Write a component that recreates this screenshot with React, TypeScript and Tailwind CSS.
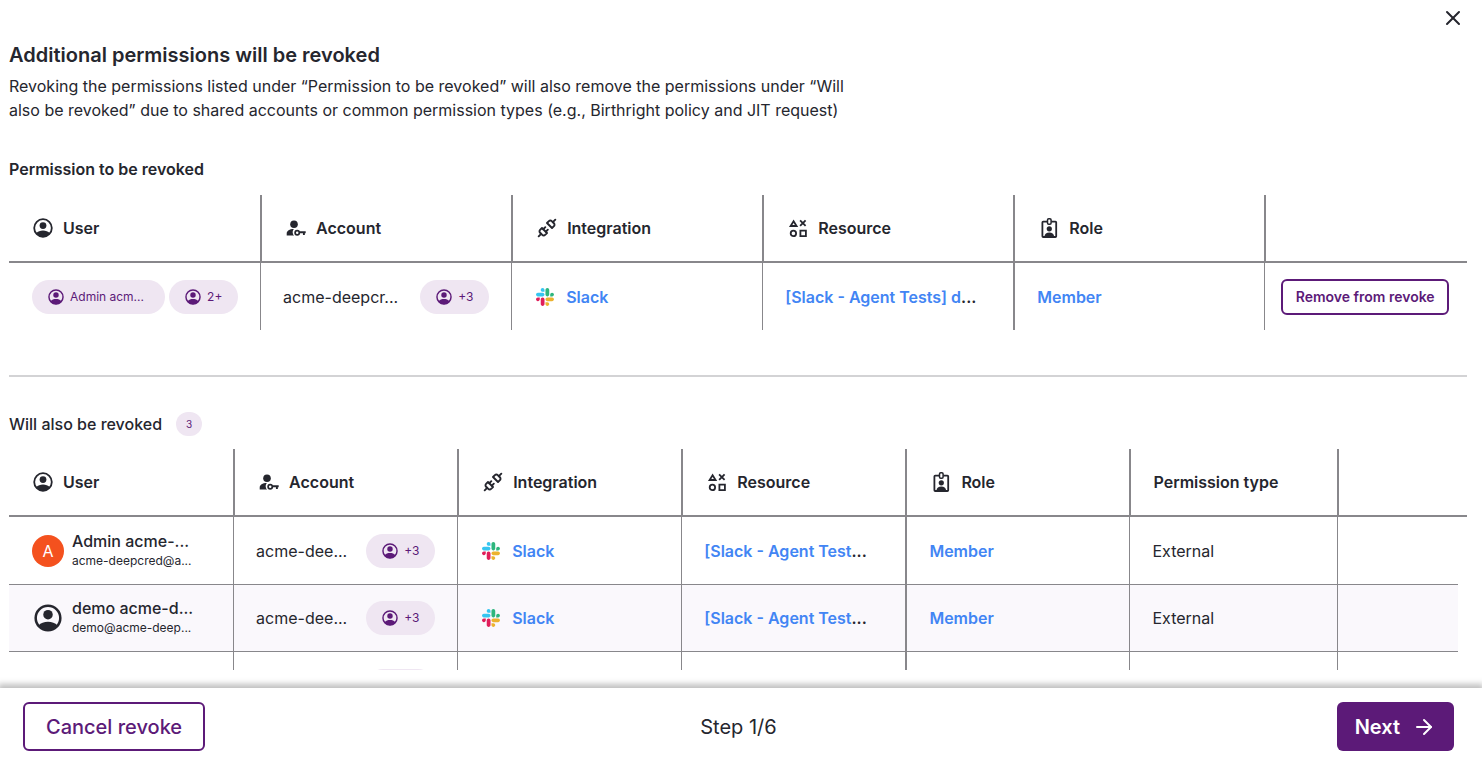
import type { ReactNode } from "react";
import { ArrowRight, Unplug, X } from "lucide-react";

type AlsoRevoked = {
  name: string;
  email: string;
  initial?: string;
  account: string;
};

const alsoRevoked: AlsoRevoked[] = [
  { name: "Admin acme-...", email: "acme-deepcred@a...", initial: "A", account: "acme-dee..." },
  { name: "demo acme-d...", email: "demo@acme-deep...", account: "acme-dee..." },
  { name: "demo acme-d...", email: "demo@acme-deep...", account: "acme-dee..." },
];

function UserIcon({ className }: { className: string }) {
  return (
    <svg viewBox="0 0 20 20" className={className} aria-hidden="true">
      <circle cx="10" cy="10" r="8.8" fill="none" stroke="currentColor" strokeWidth="1.8" />
      <circle cx="10" cy="7.6" r="3.4" fill="currentColor" />
      <path
        d="M3.2 15.3C4.8 13.4 7.3 12.6 10 12.6s5.2.8 6.8 2.7C15.4 17.6 12.9 19 10 19s-5.4-1.4-6.8-3.7Z"
        fill="currentColor"
      />
    </svg>
  );
}

function AccountIcon() {
  return (
    <svg viewBox="0 0 20 20" className="size-5" aria-hidden="true">
      <circle cx="8" cy="6.3" r="3.8" fill="currentColor" />
      <path d="M.7 17.6v-1.9c0-2.9 2.7-4.5 7.2-4.6-.9 1-1.3 2.3-1.2 3.6.1 1.2.6 2.2 1.4 2.9Z" fill="currentColor" />
      <circle cx="11.2" cy="14.7" r="2.1" fill="none" stroke="currentColor" strokeWidth="1.7" />
      <path d="M13.3 14.3h6.4M17.9 14.3v2.7" fill="none" stroke="currentColor" strokeWidth="1.9" />
    </svg>
  );
}

function ResourceIcon() {
  return (
    <svg
      viewBox="0 0 20 20"
      className="size-5"
      fill="none"
      stroke="currentColor"
      strokeWidth="1.8"
      aria-hidden="true"
    >
      <path d="M5.6 3.2 8.6 8H2.6Z" />
      <path d="m12.1 2.300 5.500 5.500M17.600 2.300l-5.500 5.500" />
      <circle cx="5.4" cy="15.4" r="2.700" />
      <path d="M12.400 12.700h5.500v5.400h-5.500Z" />
    </svg>
  );
}

function RoleIcon() {
  return (
    <svg viewBox="0 0 20 20" className="size-5" aria-hidden="true">
      <path
        d="M8.3 3.6H4.2c-.5 0-.8.3-.8.8v13.8c0 .5.3.8.8.8h12.2c.5 0 .8-.3.8-.8V4.4c0-.5-.3-.8-.8-.8h-4.1"
        fill="none"
        stroke="currentColor"
        strokeWidth="1.8"
      />
      <rect x="8.5" y=".8" width="3.6" height="5.4" rx="1.2" fill="none" stroke="currentColor" strokeWidth="1.5" />
      <circle cx="10.3" cy="10.8" r="2.6" fill="currentColor" />
      <path d="M5.4 18.4c.3-2.500 2.200-4 4.900-4s4.600 1.500 4.900 4Z" fill="currentColor" />
    </svg>
  );
}

function SlackLogo() {
  return (
    <svg viewBox="0 0 123 123" className="size-[18px] shrink-0" aria-hidden="true">
      <path
        fill="#e01e5a"
        d="M25.8 77.6c0 7.1-5.8 12.9-12.9 12.9S0 84.7 0 77.6s5.8-12.9 12.9-12.9h12.9v12.9zM32.3 77.6c0-7.1 5.8-12.9 12.9-12.9s12.9 5.8 12.9 12.9v32.3c0 7.1-5.8 12.9-12.9 12.9s-12.9-5.8-12.9-12.9V77.6z"
      />
      <path
        fill="#36c5f0"
        d="M45.2 25.8c-7.1 0-12.9-5.8-12.9-12.9S38.1 0 45.2 0s12.9 5.8 12.9 12.9v12.9H45.2zM45.2 32.3c7.1 0 12.9 5.8 12.9 12.9s-5.8 12.9-12.9 12.9H12.9C5.8 58.1 0 52.3 0 45.2s5.8-12.9 12.9-12.9h32.3z"
      />
      <path
        fill="#2eb67d"
        d="M97 45.2c0-7.1 5.8-12.9 12.9-12.9s12.9 5.8 12.9 12.9-5.8 12.9-12.9 12.9H97V45.2zM90.5 45.2c0 7.1-5.8 12.9-12.9 12.9s-12.9-5.8-12.9-12.9V12.9C64.7 5.8 70.5 0 77.6 0s12.9 5.8 12.9 12.9v32.3z"
      />
      <path
        fill="#ecb22e"
        d="M77.6 97c7.1 0 12.9 5.8 12.9 12.9s-5.8 12.9-12.9 12.9-12.9-5.8-12.9-12.9V97h12.9zM77.6 90.5c-7.1 0-12.9-5.8-12.9-12.9s5.8-12.9 12.9-12.9h32.3c7.1 0 12.9 5.8 12.9 12.9s-5.8 12.9-12.9 12.9H77.6z"
      />
    </svg>
  );
}

function HeadCell({ icon, label, width }: { icon: ReactNode; label: string; width: string }) {
  return (
    <th
      scope="col"
      className={`${width} h-[68px] border-b-2 border-l-2 border-[#88878b] pl-6 text-left font-semibold first:border-l-0`}
    >
      <div className="flex items-center gap-2.5">
        {icon}
        {label}
      </div>
    </th>
  );
}

function SharedHeads({ width }: { width: string }) {
  return (
    <>
      <HeadCell width={width} icon={<UserIcon className="size-5" />} label="User" />
      <HeadCell width={width} icon={<AccountIcon />} label="Account" />
      <HeadCell width={width} icon={<Unplug size={20} strokeWidth={2.3} />} label="Integration" />
      <HeadCell width={width} icon={<ResourceIcon />} label="Resource" />
      <HeadCell width={width} icon={<RoleIcon />} label="Role" />
    </>
  );
}

function Pill({ children, className = "w-[69px]" }: { children: ReactNode; className?: string }) {
  return (
    <span
      className={`${className} flex h-[34px] shrink-0 items-center gap-1.5 rounded-full bg-[#efe6f2] pl-4 text-xs text-[#5c1a78]`}
    >
      <UserIcon className="size-4 shrink-0" />
      {children}
    </span>
  );
}

function AccountCell({ account, className = "" }: { account: string; className?: string }) {
  return (
    <td className={`${className} border-l border-[#88878b] px-[22px]`}>
      <div className="flex items-center justify-between">
        <span className="whitespace-nowrap">{account}</span>
        <Pill>+3</Pill>
      </div>
    </td>
  );
}

function GrantCells({ resource, className = "" }: { resource: string; className?: string }) {
  return (
    <>
      <td className={`${className} border-l border-[#88878b] pl-6`}>
        <div className="flex items-center gap-3">
          <SlackLogo />
          <a href="#slack" className="font-semibold text-[#4285f4]">
            Slack
          </a>
        </div>
      </td>
      <td className={`${className} border-l border-[#88878b] pl-[22px] font-semibold whitespace-nowrap`}>
        <a href="#resource" className="text-[#4285f4]">
          {resource}
        </a>
        ...
      </td>
      <td className={`${className} border-l-2 border-[#88878b] pl-[22px]`}>
        <a href="#member" className="font-semibold text-[#4285f4]">
          Member
        </a>
      </td>
    </>
  );
}

export default function App() {
  return (
    <div className="flex h-screen flex-col overflow-hidden bg-white font-[Inter,sans-serif] text-base text-[#25262e]">
      <main className="flex min-h-0 flex-1 flex-col pr-[15px] pb-[18px] pl-[9px]">
        <div className="flex h-10 shrink-0 justify-end pt-1.5 pr-0.5">
          <button type="button" aria-label="Close" className="size-6 cursor-pointer">
            <X size={24} />
          </button>
        </div>

        <h1 className="text-xl leading-[30px] font-semibold">Additional permissions will be revoked</h1>
        <p className="mt-1 max-w-[868px] leading-6">
          Revoking the permissions listed under “Permission to be revoked” will also remove the permissions under “Will
          also be revoked” due to shared accounts or common permission types (e.g., Birthright policy and JIT request)
        </p>

        <h2 className="mt-[35px] leading-6 font-semibold">Permission to be revoked</h2>
        <table className="mt-3.5 w-full shrink-0 table-fixed border-separate border-spacing-0">
          <thead>
            <tr>
              <SharedHeads width="w-[17.22%]" />
              <th className="border-b-2 border-l-2 border-[#88878b]" aria-label="Actions" />
            </tr>
          </thead>
          <tbody>
            <tr className="h-[67px]">
              <td className="pr-[22px] pl-[23px]">
                <div className="flex gap-1">
                  <Pill className="flex-1">Admin acm...</Pill>
                  <Pill>2+</Pill>
                </div>
              </td>
              <AccountCell account="acme-deepcr..." />
              <GrantCells resource="[Slack - Agent Tests] d" />
              <td className="border-l border-[#88878b] pr-[18px] pl-4">
                <button
                  type="button"
                  className="h-9 w-full cursor-pointer rounded-md border-2 border-[#5c1a78] text-sm font-semibold whitespace-nowrap text-[#5c1a78]"
                >
                  Remove from revoke
                </button>
              </td>
            </tr>
          </tbody>
        </table>

        <hr className="mt-[45px] border-t-2 border-[#d3d3d5]" />

        <div className="mt-[35px] flex items-center gap-3.5">
          <h2 className="leading-6 font-medium">Will also be revoked</h2>
          <span className="flex h-6 w-[26px] items-center justify-center rounded-full bg-[#efe6f2] text-[10px] text-[#5c1a78]">
            3
          </span>
        </div>

        <div className="mt-[13px] min-h-0 flex-1 overflow-y-auto [scrollbar-width:none]">
          <table className="w-full table-fixed border-separate border-spacing-0">
            <thead>
              <tr>
                <SharedHeads width="w-[15.37%]" />
                <th
                  scope="col"
                  className="w-[14.25%] border-b-2 border-l-2 border-[#88878b] pl-[22px] text-left font-semibold"
                >
                  Permission type
                </th>
                <th className="border-b-2 border-l-2 border-[#88878b]" aria-label="Actions" />
                <th className="w-[9px] border-b-2 border-[#88878b]" aria-hidden="true" />
              </tr>
            </thead>
            <tbody>
              {alsoRevoked.map((row, index) => {
                const cell = index % 2 ? "h-[67px] border-b bg-[#faf8fc]" : "h-[68px] border-b";
                return (
                  <tr key={index}>
                    <td className={`${cell} border-[#88878b] pl-[23px]`}>
                      <div className="flex items-center gap-2">
                        {row.initial ? (
                          <span className="flex size-8 shrink-0 items-center justify-center rounded-full bg-[#f4511e] text-white">
                            {row.initial}
                          </span>
                        ) : (
                          <span className="flex size-8 shrink-0 items-center justify-center">
                            <UserIcon className="size-7" />
                          </span>
                        )}
                        <div className="whitespace-nowrap">
                          <div className="leading-5 font-medium">{row.name}</div>
                          <div className="text-xs leading-5">{row.email}</div>
                        </div>
                      </div>
                    </td>
                    <AccountCell account={row.account} className={cell} />
                    <GrantCells resource="[Slack - Agent Test" className={cell} />
                    <td className={`${cell} border-l border-[#88878b] pl-[22px]`}>External</td>
                    <td className={`${cell} border-l border-[#88878b]`} />
                  </tr>
                );
              })}
            </tbody>
          </table>
        </div>
      </main>

      <footer className="relative grid shrink-0 grid-cols-3 items-center bg-white pt-3.5 pr-7 pb-2 pl-[23px] text-xl shadow-[0_-2px_6px_2px_rgba(0,0,0,0.25)]">
        <button
          type="button"
          className="h-[49px] cursor-pointer justify-self-start rounded-md border-2 border-[#5c1a78] px-[21px] font-medium text-[#5c1a78]"
        >
          Cancel revoke
        </button>
        <span className="text-center">Step 1/6</span>
        <button
          type="button"
          className="flex h-[49px] cursor-pointer items-center gap-3 justify-self-end rounded-md bg-[#5c1a78] px-[18px] font-semibold text-white"
        >
          Next
          <ArrowRight size={24} />
        </button>
      </footer>
    </div>
  );
}
